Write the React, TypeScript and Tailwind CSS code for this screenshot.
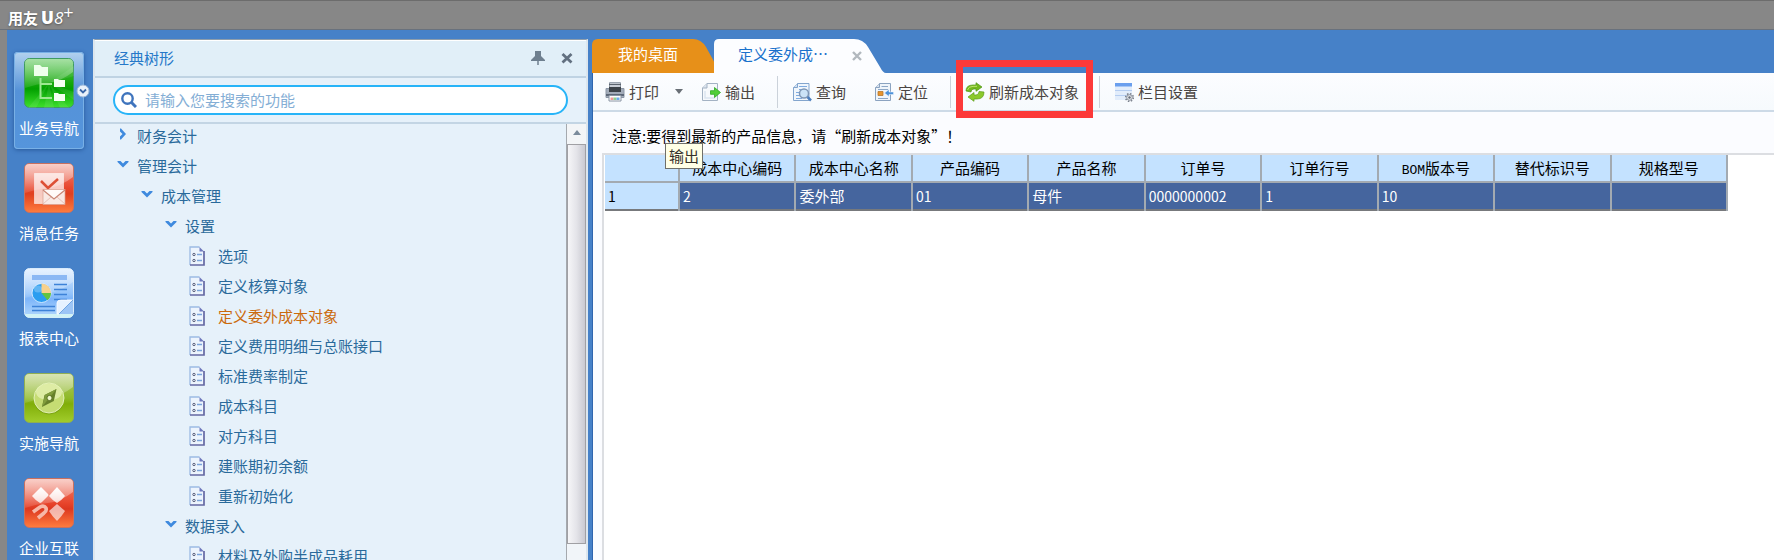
import React from 'react';

const cjk = "font-['Noto_Sans_CJK_SC','Liberation_Sans',sans-serif]";

/* ---------- sidebar icons (50 x 50) ---------- */

function Tile({ id, stops, edge, glow, children }: {
  id: string; stops: string[]; edge: string; glow: number; children: React.ReactNode;
}) {
  return (
    <svg viewBox="0 0 50 50" className="size-[50px] shrink-0" aria-hidden="true">
      <defs>
        <linearGradient id={id} x1="0" y1="0" x2="0" y2="1">
          <stop offset="0" stopColor={stops[0]} />
          <stop offset="0.5" stopColor={stops[1]} />
          <stop offset="0.62" stopColor={stops[2]} />
          <stop offset="1" stopColor={stops[3]} />
        </linearGradient>
        <linearGradient id={id + 'g'} x1="0" y1="0" x2="0" y2="1">
          <stop offset="0" stopColor="#fff" stopOpacity={glow} />
          <stop offset="1" stopColor="#fff" stopOpacity="0.1" />
        </linearGradient>
        <linearGradient id={id + 'w'} x1="0" y1="0" x2="0" y2="1">
          <stop offset="0" stopColor="#fff" />
          <stop offset="1" stopColor="#fff" stopOpacity="0.75" />
        </linearGradient>
      </defs>
      <rect x="0.5" y="0.5" width="49" height="49" rx="5" fill={`url(#${id})`} stroke={edge} />
      <path d="M1 5a4 4 0 0 1 4-4h40a4 4 0 0 1 4 4v9Q36 24 24 25T1 30Z" fill={`url(#${id}g)`} />
      {children}
    </svg>
  );
}

function NavTreeIcon() {
  return (
    <Tile id="nav" stops={['#5fc85a', '#14a80a', '#02a000', '#3ee02c']} edge="#3f9a62" glow={0.45}>
      <path d="M25 25 4 50h8ZM25 25l-5 25h10ZM25 25l20 25h-9ZM25 25 50 8v10ZM25 25l25 9v8Z" fill="#fff" opacity="0.08" />
      <path d="M16.500 20v20H28M16.500 26H28" fill="none" stroke="#9ce890" strokeWidth="2" />
      <path d="M10 7h6l2 2h6v9H10Z" fill="#efffec" />
      <path d="M30 21h4l1 1h6v7H30Z" fill="#f4fff2" />
      <path d="M30 35h4l1 1h6v7H30Z" fill="#f4fff2" />
    </Tile>
  );
}

function MessageIcon() {
  return (
    <Tile id="msg" stops={['#f08878', '#e8452c', '#e0401f', '#ff7d3e']} edge="#c8705f" glow={0.6}>
      <rect x="10.500" y="10.500" width="29" height="30" fill="#fff" fillOpacity="0.72" stroke="#fff" strokeOpacity="0.5" />
      <path d="m17 18 7 7 10-9" fill="none" stroke="#dd5036" strokeWidth="2.500" />
      <rect x="19" y="26.500" width="22" height="15" fill="#f9e9e4" stroke="#d9a091" strokeWidth="0.700" />
      <path d="m19 27 11 9 11-9" fill="#fffaf8" stroke="#c98574" strokeWidth="1.200" />
      <path d="m19 41 8-7m14 7-8-7" fill="none" stroke="#e0b8ae" strokeWidth="0.800" />
    </Tile>
  );
}

function ReportIcon() {
  return (
    <Tile id="rep" stops={['#d5e8ff', '#94c4fb', '#7db5fa', '#b4d9fc']} edge="#d9ebfb" glow={0.45}>
      <path d="M1 46h48a4 4 0 0 1-4 3.500H5a4 4 0 0 1-4-3.500Z" fill="#d2f3f5" />
      <rect x="8" y="7" width="35" height="5" fill="#8bb8f4" />
      <path d="M30 16.500h13M30 21.500h13M30 26.500h13M30 31.500h13M8 38.500h23M8 42.500h23" stroke="#3d82d8" strokeWidth="1.300" />
      <circle cx="17.500" cy="25" r="9.500" fill="#2b9df0" stroke="#e8f4ff" strokeWidth="0.800" />
      <path d="M17.500 25v-9.500A9.500 9.500 0 0 1 27 25Z" fill="#f8d18c" />
      <path d="M17.500 25H27a9.500 9.500 0 0 1-3.500 7.300Z" fill="#63c441" />
      <ellipse cx="14" cy="21" rx="4" ry="3.500" fill="#fff" opacity="0.25" />
      <path d="M33 46V35q0-3 4-3h12L35 46Z" fill="#e6f2ff" stroke="#fff" strokeWidth="0.800" />
      <path d="m35 46 14-14v14Z" fill="#9cc5f6" />
      <path d="m35 46 14-14" stroke="#5b97dc" strokeWidth="0.800" />
    </Tile>
  );
}

function CompassIcon() {
  return (
    <Tile id="cmp" stops={['#b2ca6a', '#8fb928', '#80ae08', '#a2cd2c']} edge="#8fae52" glow={0.5}>
      <circle cx="25" cy="26.500" r="15" fill="#6f9413" opacity="0.6" />
      <circle cx="25" cy="25" r="15" fill="#c5dc73" stroke="#eef7cb" strokeWidth="0.800" />
      <ellipse cx="25" cy="19" rx="13" ry="8.500" fill="#e6f2b4" opacity="0.75" />
      <path d="m32.500 16-2.700 12L18 34l2.500-12Z" fill="#66802a" />
      <path d="M32.500 16 21 22l-3 12Z" fill="#809c3c" />
      <circle cx="25.500" cy="25" r="2.600" fill="#eef7cb" stroke="#5b7423" />
    </Tile>
  );
}

function EnterpriseIcon() {
  return (
    <Tile id="ent" stops={['#f08878', '#e8452c', '#dd3820', '#ff7d3e']} edge="#c8705f" glow={0.6}>
      <path d="m17 9 7 7q1 1 0 2l-6 6q-1 1-2 1-4-2-8-7Z" fill="url(#entw)" />
      <path d="m33 9 8 9q-4 5-8 7-4-2-8-7Z" fill="url(#entw)" />
      <path d="m33 26 8 7q-3 5-8 10-5-5-8-10Z" fill="#fff" opacity="0.62" />
      <path d="m9 34 7-5q4-2 6 1 1 3-2 5l-6 5" fill="none" stroke="#f6b8a8" strokeWidth="3.600" />
    </Tile>
  );
}

const navItems = [
  { label: '业务导航', icon: <NavTreeIcon />, active: true },
  { label: '消息任务', icon: <MessageIcon /> },
  { label: '报表中心', icon: <ReportIcon /> },
  { label: '实施导航', icon: <CompassIcon /> },
  { label: '企业互联', icon: <EnterpriseIcon /> },
];

function Sidebar() {
  return (
    <nav className="flex w-[86px] shrink-0 flex-col gap-2 overflow-hidden pt-[22px] pr-[9px] pl-[7px]">
      {navItems.map((it) => (
        <button
          key={it.label}
          type="button"
          className={
            'relative flex h-[97px] w-full shrink-0 flex-col items-center gap-2 rounded pt-[6px] text-[15px] leading-6 text-white ' +
            (it.active
              ? 'bg-linear-to-b from-[#b3d2ef] from-0% via-[#5592d8] via-40% to-[#5595dc] shadow-[inset_0_0_0_1px_#78b0e6,0_1px_4px_#28599c]'
              : '')
          }
        >
          {it.icon}
          <span className="whitespace-nowrap">{it.label}</span>
          {it.active && (
            <svg viewBox="0 0 14 14" className="absolute -right-[6px] top-8 size-[14px]" aria-hidden="true">
              <circle cx="7" cy="7" r="6" fill="#e9f1fa" stroke="#9db9da" />
              <path d="m4 5.500 3 3 3-3" fill="none" stroke="#3a67a8" strokeWidth="1.800" />
            </svg>
          )}
        </button>
      ))}
    </nav>
  );
}

/* ---------- tree ---------- */

type Node = { label: string; depth: number; kind: 'open' | 'closed' | 'leaf'; current?: boolean };

const tree: Node[] = [
  { label: '财务会计', depth: 0, kind: 'closed' },
  { label: '管理会计', depth: 0, kind: 'open' },
  { label: '成本管理', depth: 1, kind: 'open' },
  { label: '设置', depth: 2, kind: 'open' },
  { label: '选项', depth: 3, kind: 'leaf' },
  { label: '定义核算对象', depth: 3, kind: 'leaf' },
  { label: '定义委外成本对象', depth: 3, kind: 'leaf', current: true },
  { label: '定义费用明细与总账接口', depth: 3, kind: 'leaf' },
  { label: '标准费率制定', depth: 3, kind: 'leaf' },
  { label: '成本科目', depth: 3, kind: 'leaf' },
  { label: '对方科目', depth: 3, kind: 'leaf' },
  { label: '建账期初余额', depth: 3, kind: 'leaf' },
  { label: '重新初始化', depth: 3, kind: 'leaf' },
  { label: '数据录入', depth: 2, kind: 'open' },
  { label: '材料及外购半成品耗用', depth: 3, kind: 'leaf' },
];

const indent = ['pl-[22px]', 'pl-[46px]', 'pl-[70px]', 'pl-[94px]'];

function DocIcon() {
  return (
    <svg viewBox="0 0 16 20" className="h-5 w-4 shrink-0" aria-hidden="true">
      <path d="M1 1h9.500L15 5.500V19H1Z" fill="#edf4fd" />
      <path d="M1 19V1h9.500" fill="none" stroke="#9cbbe4" strokeWidth="1.300" />
      <path d="M10.500 1v4.500H15Z" fill="#6f79bd" />
      <path d="M15 5v14H1" fill="none" stroke="#6468a3" strokeWidth="1.700" />
      <path d="M8 8.500H13M8 14.500H13" stroke="#7ba4dc" strokeWidth="1.300" />
      <circle cx="5" cy="8.500" r="1.200" fill="none" stroke="#565b78" />
      <circle cx="5" cy="14.500" r="1.200" fill="none" stroke="#565b78" />
    </svg>
  );
}

function TreeRow({ n }: { n: Node }) {
  return (
    <li className={`${indent[n.depth]} h-[30px] shrink-0`}>
      <a
        href="#"
        className={`flex h-full items-center pb-[6px] text-[15px] leading-[22px] whitespace-nowrap ${n.current ? 'text-[#cb6a0c]' : 'text-[#2a6a9b]'}`}
      >
        <span className={n.kind === 'leaf' ? 'w-[29px]' : 'w-5 pb-1'}>
          {n.kind === 'leaf' && <DocIcon />}
          {n.kind === 'open' && (
            <svg viewBox="0 0 12 12" className="size-3" aria-hidden="true">
              <path d="M0.500 3h3L6 5.500 8.500 3h3v1L6 9.500 0.500 4Z" fill="#3f8ade" />
            </svg>
          )}
          {n.kind === 'closed' && (
            <svg viewBox="0 0 12 12" className="size-3" aria-hidden="true">
              <path d="M3 0.500h1L9 6l-5 5.500H3v-3L5.500 6 3 3.500Z" fill="#3f8ade" />
            </svg>
          )}
        </span>
        {n.label}
      </a>
    </li>
  );
}

function TreePanel() {
  return (
    <section className="flex w-[495px] shrink-0 flex-col border-x-2 border-t border-x-[#dce6ee] border-t-[#8d9dac] bg-[#e6f1fa]">
      <header className="flex h-[38px] shrink-0 items-center border-b-2 border-t border-t-white border-b-[#bfd3e3] bg-[#e1eff8] pr-3 pb-[2px] pl-[19px]">
        <h2 className="flex-1 text-[15px] leading-6 text-[#2678c8]">经典树形</h2>
        <button type="button" aria-label="固定" className="mr-4">
          <svg viewBox="0 0 14 14" className="size-[14px]" aria-hidden="true">
            <path d="M4 0h6v5l4 4v1H0V9l4-4Z" fill="#6e7f8f" />
            <path d="M7 9v5" stroke="#6e7f8f" strokeWidth="1.500" />
          </svg>
        </button>
        <button type="button" aria-label="关闭" className="pr-px">
          <svg viewBox="0 0 12 12" className="size-3" aria-hidden="true">
            <path d="m1.500 2 9 8.500m0-8.500-9 8.500" stroke="#627080" strokeWidth="2.800" />
          </svg>
        </button>
      </header>
      <div className="flex h-[46px] shrink-0 items-center border-b-2 border-[#c3d5e4] pr-[18px] pl-[18px]">
        <label className="flex h-[30px] flex-1 items-center gap-2 rounded-full border-2 border-[#27b4f8] bg-white pl-[6px]">
          <svg viewBox="0 0 16 16" className="size-4 shrink-0" aria-hidden="true">
            <circle cx="6.500" cy="6.500" r="5.200" fill="none" stroke="#3f74bd" strokeWidth="2.400" />
            <path d="m10.500 10.500 4.500 4.500" stroke="#3f74bd" strokeWidth="3" />
          </svg>
          <input
            type="text"
            aria-label="搜索功能"
            placeholder="请输入您要搜索的功能"
            className="min-w-0 flex-1 bg-transparent text-[15px] leading-6 outline-none placeholder:text-[#84aed5]"
          />
        </label>
      </div>
      <div className="flex min-h-0 flex-1">
        <ul className="flex min-w-0 flex-1 flex-col overflow-hidden">
          {tree.map((n) => <TreeRow key={n.label} n={n} />)}
        </ul>
        <div className="flex w-5 shrink-0 flex-col border-l border-[#a5a9ae] bg-[#f1f5f9] pb-4" aria-hidden="true">
          <div className="flex h-5 items-center justify-center bg-[#f3f5f7] pb-1">
            <svg viewBox="0 0 8 5" className="h-[5px] w-2"><path d="M4 0 8 5H0Z" fill="#7b8b9b" /></svg>
          </div>
          <div className="flex-1 border border-[#a0a0a4] bg-linear-to-r from-[#f6f6f8] via-[#e4e4e9] to-[#c9c9d1]" />
        </div>
      </div>
    </section>
  );
}

/* ---------- toolbar icons (20 x 20) ---------- */

function PrintIcon() {
  return (
    <svg viewBox="0 0 20 20" className="size-5 shrink-0" aria-hidden="true">
      <path d="M4.500 0.700h11V7h-11Z" fill="#c9ced6" stroke="#8a94a1" />
      <path d="M1 6.500h18v9H1Z" fill="#a3acb9" stroke="#8c97a6" />
      <path d="M4 5h12v5H4Z" fill="#3d4349" />
      <path d="M4 2.500h12" stroke="#5b636d" />
      <path d="M1 12h18v2H1Z" fill="#5d6878" />
      <path d="M4 13.500h12V19H4Z" fill="#fff" stroke="#8a94a3" />
      <path d="M5.500 15.500h3v2.500h-3Z" fill="#ee9a9a" />
      <path d="M8.500 15.500h3v2.500h-3Z" fill="#8fd191" />
      <path d="M11.500 15.500h3v2.500h-3Z" fill="#6eacea" />
    </svg>
  );
}

function ExportIcon() {
  return (
    <svg viewBox="0 0 20 20" className="size-5 shrink-0" aria-hidden="true">
      <path d="M6 1.500h10.500v17h-15V6Z" fill="#f6f9fc" stroke="#a3b2c3" />
      <path d="M6 1.500V6H1.500" fill="#dbe4ee" stroke="#a3b2c3" />
      <path d="M4 9v7h10" stroke="#dbe5ef" fill="none" strokeWidth="1.500" />
      <path d="M9.500 8.700h4V5.500l6 5-6 5v-3.200h-4Z" fill="#52cf38" stroke="#2fa823" strokeWidth="0.800" />
    </svg>
  );
}

function QueryIcon() {
  return (
    <svg viewBox="0 0 20 20" className="size-5 shrink-0" aria-hidden="true">
      <path d="M5.500 1.500h11.500v17H1.500v-13Z" fill="#f0f6fc" stroke="#83a5cd" />
      <path d="M5.500 1.500v4h-4" fill="#d1e1f3" stroke="#83a5cd" />
      <path d="M7 4.500h8M7 7.500h4M4 10.500h4M4 13.500h4M4 16.500h6" stroke="#7eabe0" />
      <circle cx="12" cy="11.500" r="4.500" fill="#cbe3f7" stroke="#7f97b5" strokeWidth="1.500" />
      <path d="m15.500 15 3.500 3.500" stroke="#4d7fbd" strokeWidth="2.500" />
    </svg>
  );
}

function LocateIcon() {
  return (
    <svg viewBox="0 0 20 20" className="size-5 shrink-0" aria-hidden="true">
      <path d="M5.500 1.500h11v17h-15v-13Z" fill="#f0f5fa" stroke="#8ba3c0" />
      <path d="M5.500 1.500v4h-4" fill="#d6e2ef" stroke="#8ba3c0" />
      <path d="M7.500 4.500H14M4 16.500h10M4 7.500h10" stroke="#8ea8c7" />
      <path d="M4 9.500h5v4H4Z" fill="#e7942e" stroke="#b7772a" strokeWidth="0.800" />
      <path d="M19.500 10H15V7.500L10.500 11l4.500 3.500V12.500h4.500Z" fill="#4b91da" stroke="#edf5fd" strokeWidth="0.500" />
    </svg>
  );
}

function RefreshIcon() {
  return (
    <svg viewBox="0 0 20 20" className="size-5 shrink-0" aria-hidden="true">
      <path d="M1 9q0-6 7-6h3V0.700L17 5l-6 4.300V7H9Q6 7 6 10Z" fill="#72b81e" stroke="#4d9414" strokeWidth="0.700" />
      <path d="M19 10q0 7-7 7H9v2.300L3 15l6-4.500V13h2q3 0 3-3.500Z" fill="#8cc92d" stroke="#5a9e16" strokeWidth="0.700" />
      <path d="M2.500 8Q3.500 4.500 8 4.300h4" fill="none" stroke="#bde46c" />
    </svg>
  );
}

function ColumnsIcon() {
  return (
    <svg viewBox="0 0 20 20" className="size-5 shrink-0" aria-hidden="true">
      <path d="M1 1h17v17H1Z" fill="#e2edfb" />
      <path d="M1 1h17v3.500H1Z" fill="#6a9fee" />
      <path d="M1 8.500h17M1 13.500h12" stroke="#b5cdf0" />
      <circle cx="15.500" cy="15.500" r="3.800" fill="none" stroke="#7b828d" strokeWidth="1.600" strokeDasharray="1.500 1.480" />
      <circle cx="15.500" cy="15.500" r="2.800" fill="#e9ebef" stroke="#8a919b" />
      <circle cx="15.500" cy="15.500" r="1.200" fill="#636b77" />
    </svg>
  );
}

function ToolButton({ icon, label, children }: { icon: React.ReactNode; label: string; children?: React.ReactNode }) {
  return (
    <button type="button" className="relative flex shrink-0 items-center gap-1 text-[15px] leading-6 whitespace-nowrap text-[#4a4542]">
      {icon}
      <span>{label}</span>
      {children}
    </button>
  );
}

const Divider = () => <span className="h-8 w-px shrink-0 bg-[#cbd2da]" />;

function Tabs() {
  return (
    <div className="flex h-[34px] shrink-0 bg-[#4681c8]">
      <button type="button" className="relative h-full w-[122px] shrink-0 pb-1 pl-[26px] text-left text-[15px] leading-6 text-white">
        <svg viewBox="0 0 130 34" className="absolute top-0 left-0 h-[34px] w-[130px]" aria-hidden="true">
          <path d="M0 34V6q0-6 6-6h95q8 0 13 8l11 20v6Z" fill="#e79019" />
        </svg>
        <span className="relative">我的桌面</span>
      </button>
      <div className="relative flex h-full w-[172px] shrink-0 items-center justify-between pr-6 pb-1 pl-6">
        <svg viewBox="0 0 172 34" className="absolute top-0 left-0 h-[34px] w-[172px]" aria-hidden="true">
          <path d="M0 34V5q0-5 5-5h135q9 0 14 8l12 20q3 6 6 6Z" fill="#fcfdff" />
        </svg>
        <button type="button" className="relative text-[15px] leading-6 text-[#1971cc]">定义委外成⋯</button>
        <button type="button" aria-label="关闭标签" className="relative">
          <svg viewBox="0 0 10 10" className="mt-1 size-[10px]" aria-hidden="true">
            <path d="m1 1 8 8m0-8-8 8" stroke="#b2b8be" strokeWidth="2.400" />
          </svg>
        </button>
      </div>
    </div>
  );
}

function Toolbar() {
  return (
    <div className="flex h-[39px] shrink-0 items-center border-b-2 border-[#cddae7] bg-linear-to-b from-[#fcfdff] to-[#f6fafd] pl-3">
      <ToolButton icon={<PrintIcon />} label="打印" />
      <button type="button" aria-label="打印选项" className="mr-[18px] ml-4">
        <svg viewBox="0 0 8 5" className="h-[5px] w-2" aria-hidden="true"><path d="M0 0h8L4 5Z" fill="#696f76" /></svg>
      </button>
      <ToolButton icon={<ExportIcon />} label="输出">
        <span role="tooltip" className="absolute top-[63px] right-[52px] z-20 border border-[#6f6f6a] bg-[#ffffe6] px-[3px] text-[15px] leading-6 text-[#343029]">
          输出
        </span>
      </ToolButton>
      <span className="w-[22px]" />
      <Divider />
      <div className="flex gap-7 pr-[22px] pl-[14px]">
        <ToolButton icon={<QueryIcon />} label="查询" />
        <ToolButton icon={<LocateIcon />} label="定位" />
      </div>
      <Divider />
      <div className="flex pr-5 pl-[14px]">
        <ToolButton icon={<RefreshIcon />} label="刷新成本对象">
          <span className="pointer-events-none absolute -top-[20px] -right-[14px] -bottom-[14px] -left-[9px] z-10 border-[7px] border-[#fc3939]" />
        </ToolButton>
      </div>
      <Divider />
      <div className="flex pl-[14px]">
        <ToolButton icon={<ColumnsIcon />} label="栏目设置" />
      </div>
    </div>
  );
}

/* ---------- grid ---------- */

const columns = ['成本中心编码', '成本中心名称', '产品编码', '产品名称', '订单号', '订单行号', 'BOM版本号', '替代标识号', '规格型号'];
const row = ['2', '委外部', '01', '母件', '0000000002', '1', '10', '', ''];

function Grid() {
  return (
    <table className="w-[1123px] table-fixed border-collapse border-r-2 border-b-2 border-[#77797c] text-[15px] leading-6">
      <thead>
        <tr className="h-[27px] bg-[#c4e2ff] text-black">
          <th className="w-[74px] border-r-2 border-b-2 border-[#a3aab1]" aria-label="行号" />
          {columns.map((c) => (
            <th key={c} className="border-r-2 border-b-2 border-[#a3aab1] p-0 font-normal whitespace-nowrap">
              {c.startsWith('BOM') ? <><span className="font-['Liberation_Mono',monospace] text-[13px] leading-none">BOM</span>{c.slice(3)}</> : c}
            </th>
          ))}
        </tr>
      </thead>
      <tbody>
        <tr className="h-7 bg-[#45659e] text-white">
          <th className="border-r-2 border-[#a3aab1] bg-[#c4e2ff] p-0 pl-[3px] text-left text-[14px] font-normal text-black">1</th>
          {row.map((v, i) => (
            <td key={columns[i]} className={`border-r-2 border-[#a3aab1] p-0 pl-[3px] ${/^\d/.test(v) ? 'text-[14px]' : ''}`}>{v}</td>
          ))}
        </tr>
      </tbody>
    </table>
  );
}

export default function App() {
  return (
    <div lang="zh-CN" className={`flex h-screen flex-col overflow-hidden bg-[#878787] ${cjk}`}>
      <header className="flex h-[30px] shrink-0 items-start gap-[3px] border-t border-b border-t-[#6c6c6c] border-b-[#69717c] pt-[5px] pl-2 text-white [text-shadow:0_1px_2px_#555]">
        <span className="text-[15px] leading-6 font-bold">用友</span>
        <span className="flex items-start font-['Open_Sans','Liberation_Sans',sans-serif] leading-6">
          <b className="text-[17px] font-extrabold">U</b>
          <i className="text-[17px]">8</i>
          <span className="text-[18px] leading-3">+</span>
        </span>
      </header>
      <div className="flex min-h-0 flex-1 pl-[7px]">
        <div className="flex min-w-0 flex-1 bg-[#4681c8]">
          <Sidebar />
          <div className="flex min-w-0 flex-1 gap-1 pt-[9px]">
            <TreePanel />
            <main className="flex min-w-0 flex-1 flex-col">
              <Tabs />
              <div className="flex min-h-0 flex-1 flex-col border-l border-[#2f65ae] bg-[#fbfcff]">
                <Toolbar />
                <p className="h-[41px] shrink-0 pt-3 pl-[19px] text-[15px] leading-6 whitespace-nowrap text-black">
                  注意:要得到最新的产品信息，请“刷新成本对象”！
                </p>
                <div className="ml-[9px] min-h-0 flex-1 overflow-hidden border-t-2 border-l-2 border-[#dcdee2] bg-white pl-px">
                  <Grid />
                </div>
              </div>
            </main>
          </div>
        </div>
      </div>
    </div>
  );
}
